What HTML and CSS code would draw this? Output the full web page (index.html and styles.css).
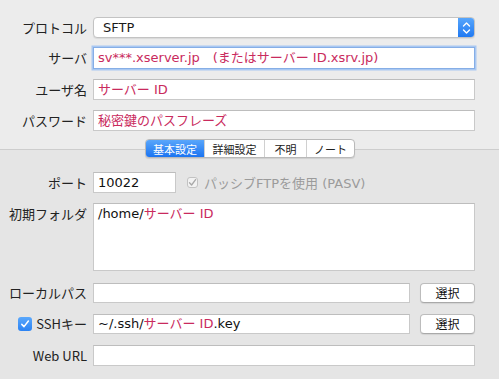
FILE: index.html
```html
<!DOCTYPE html>
<html lang="ja">
<head>
<meta charset="utf-8">
<link rel="stylesheet" href="styles.css">
</head>
<body>
<div class="window">
  <section class="top">
    <div class="row">
      <label class="lbl">プロトコル</label>
      <div class="popup">
        <span class="popup-text">SFTP</span>
        <span class="stepper">
          <svg width="9" height="14" viewBox="0 0 9 14"><path d="M1.5 5 L4.5 2 L7.5 5 M1.5 9 L4.5 12 L7.5 9" fill="none" stroke="#fff" stroke-width="1.4" stroke-linecap="round" stroke-linejoin="round"/></svg>
        </span>
      </div>
    </div>
    <div class="row">
      <label class="lbl">サーバ</label>
      <div class="field focus"><span class="red">sv***.xserver.jp　(またはサーバー ID.xsrv.jp)</span></div>
    </div>
    <div class="row">
      <label class="lbl">ユーザ名</label>
      <div class="field"><span class="red">サーバー ID</span></div>
    </div>
    <div class="row">
      <label class="lbl">パスワード</label>
      <div class="field"><span class="red">秘密鍵のパスフレーズ</span></div>
    </div>
  </section>
  <section class="bottom">
    <div class="tabs">
      <span class="tab sel t1">基本設定</span><span class="tab t2">詳細設定</span><span class="tab t3">不明</span><span class="tab t4">ノート</span>
    </div>
    <div class="row port-row">
      <label class="lbl">ポート</label>
      <div class="port-line">
        <div class="field port">10022</div>
        <span class="cb-gray">
          <svg width="9" height="9" viewBox="0 0 9 9"><path d="M1.5 4.8 L3.6 7 L7.6 1.6" fill="none" stroke="#a8a8a8" stroke-width="1.3" stroke-linecap="round" stroke-linejoin="round"/></svg>
        </span>
        <span class="pasv">パッシブFTPを使用 (PASV)</span>
      </div>
    </div>
    <div class="row folder-row">
      <label class="lbl top-lbl">初期フォルダ</label>
      <div class="field area">/home/<span class="red">サーバー ID</span></div>
    </div>
    <div class="row local-row">
      <label class="lbl">ローカルパス</label>
      <div class="with-btn">
        <div class="field"></div>
        <button class="btn">選択</button>
      </div>
    </div>
    <div class="row ssh-row">
      <label class="lbl ssh-lbl">
        <span class="cb-blue">
          <svg width="10" height="10" viewBox="0 0 10 10"><path d="M1.8 5.4 L4 7.6 L8.4 2" fill="none" stroke="#fff" stroke-width="1.5" stroke-linecap="round" stroke-linejoin="round"/></svg>
        </span>SSHキー</label>
      <div class="with-btn">
        <div class="field">~/.ssh/<span class="red">サーバー ID</span>.key</div>
        <button class="btn">選択</button>
      </div>
    </div>
    <div class="row web-row">
      <label class="lbl">Web URL</label>
      <div class="field"></div>
    </div>
  </section>
</div>
</body>
</html>
```

FILE: styles.css
```css
html, body {
  margin: 0;
  padding: 0;
}
body {
  width: 499px;
  height: 379px;
  overflow: hidden;
  background: #e6e6e6;
  font-family: "DejaVu Sans", "Noto Sans CJK JP", sans-serif;
  font-size: 13px;
  color: #1a1a1a;
}
.window {
  height: 379px;
  display: flex;
  flex-direction: column;
  background: linear-gradient(to right, rgba(0,0,0,0) 484px, rgba(0,0,0,0.03) 499px);
}
.top {
  background: #ececec;
  padding: 17px 24px 18px 0;
  border-bottom: 1px solid #cdcdcd;
  display: flex;
  flex-direction: column;
}
.bottom {
  flex: 1;
  background: #e5e5e5;
  padding: 0 24px 0 0;
  display: flex;
  flex-direction: column;
}
.row {
  display: grid;
  grid-template-columns: 87px 1fr;
  column-gap: 6px;
  align-items: center;
}
.top .row + .row {
  margin-top: 10px;
}
.top .row:nth-child(2) {
  margin-top: 9px;
}
.lbl {
  text-align: right;
  font-family: "Noto Sans CJK JP", "DejaVu Sans", sans-serif;
  font-size: 13px;
  color: #222;
  line-height: 16px;
  white-space: nowrap;
}
.field {
  height: 21px;
  box-sizing: border-box;
  background: #fff;
  border: 1px solid #c9c9c9;
  border-top-color: #bdbdbd;
  padding: 0 4px;
  line-height: 19px;
  font-size: 13px;
  white-space: nowrap;
  overflow: hidden;
  color: #111;
}
.field.focus {
  height: 22px;
  border: 1px solid #86aee6;
  box-shadow: 0 0 0 1.5px #a9c8f2;
  margin-right: 0;
  line-height: 20px;
}
.red {
  color: #c92a5d;
}
.popup {
  height: 21px;
  box-sizing: border-box;
  background: #fff;
  border: 1px solid #c3c3c3;
  border-radius: 4px;
  display: flex;
  align-items: center;
  justify-content: space-between;
  box-shadow: 0 1px 1px rgba(0,0,0,0.08);
  overflow: hidden;
}
.popup-text {
  padding-left: 9px;
  line-height: 19px;
}
.stepper {
  width: 17px;
  height: 21px;
  margin: -1px -1px -1px 0;
  background: linear-gradient(#5aa8fc, #1d77f2);
  border-radius: 0 4px 4px 0;
  display: flex;
  align-items: center;
  justify-content: center;
}
.tabs {
  align-self: flex-start;
  margin: -11px 0 0 145px;
  display: flex;
  height: 19px;
  box-sizing: border-box;
  border: 1px solid #b9b9b9;
  border-radius: 4px;
  background: #fff;
  overflow: hidden;
  box-shadow: 0 1px 1px rgba(0,0,0,0.1);
}
.tab {
  display: flex;
  align-items: center;
  justify-content: center;
  font-family: "Noto Sans CJK JP", sans-serif;
  font-size: 11px;
  color: #222;
  border-left: 1px solid #d0d0d0;
  height: 17px;
}
.tab.sel {
  background: linear-gradient(#59a6fb, #1b74f1);
  color: #fff;
  border-left: none;
}
.t1 { width: 58px; }
.t2 { width: 59px; }
.t3 { width: 41px; }
.t4 { width: 47px; }
.port-row {
  margin-top: 14px;
}
.port-line {
  display: flex;
  align-items: center;
}
.field.port {
  width: 83px;
}
.cb-gray {
  width: 11px;
  height: 11px;
  box-sizing: border-box;
  border: 1px solid #c2c2c2;
  border-radius: 3px;
  background: #f2f2f2;
  margin-left: 11px;
  display: flex;
  align-items: center;
  justify-content: center;
}
.pasv {
  margin-left: 6px;
  color: #9b9b9b;
  font-family: "DejaVu Sans", "Noto Sans CJK JP", sans-serif;
  font-size: 13px;
}
.folder-row {
  margin-top: 10px;
  align-items: start;
}
.top-lbl {
  padding-top: 3px;
}
.field.area {
  height: 68px;
  line-height: 20px;
  padding-top: 0;
}
.local-row {
  margin-top: 12px;
}
.ssh-row {
  margin-top: 11px;
}
.web-row {
  margin-top: 11px;
}
.with-btn {
  display: flex;
  align-items: center;
  gap: 10px;
}
.with-btn .field {
  flex: 1;
  height: 20px;
  line-height: 18px;
}
.btn {
  width: 55px;
  height: 20px;
  padding: 0;
  background: #fff;
  border: 1px solid #bcbcbc;
  border-bottom-color: #a9a9a9;
  border-radius: 4px;
  font-family: "Noto Sans CJK JP", sans-serif;
  font-size: 12px;
  color: #111;
  line-height: 18px;
  box-shadow: 0 1px 1px rgba(0,0,0,0.08);
}
.ssh-lbl {
  display: flex;
  align-items: center;
  justify-content: flex-end;
  gap: 4px;
}
.cb-blue {
  width: 14px;
  height: 14px;
  border-radius: 3px;
  background: linear-gradient(#5aa8fc, #2a82f3);
  display: flex;
  align-items: center;
  justify-content: center;
}
```
